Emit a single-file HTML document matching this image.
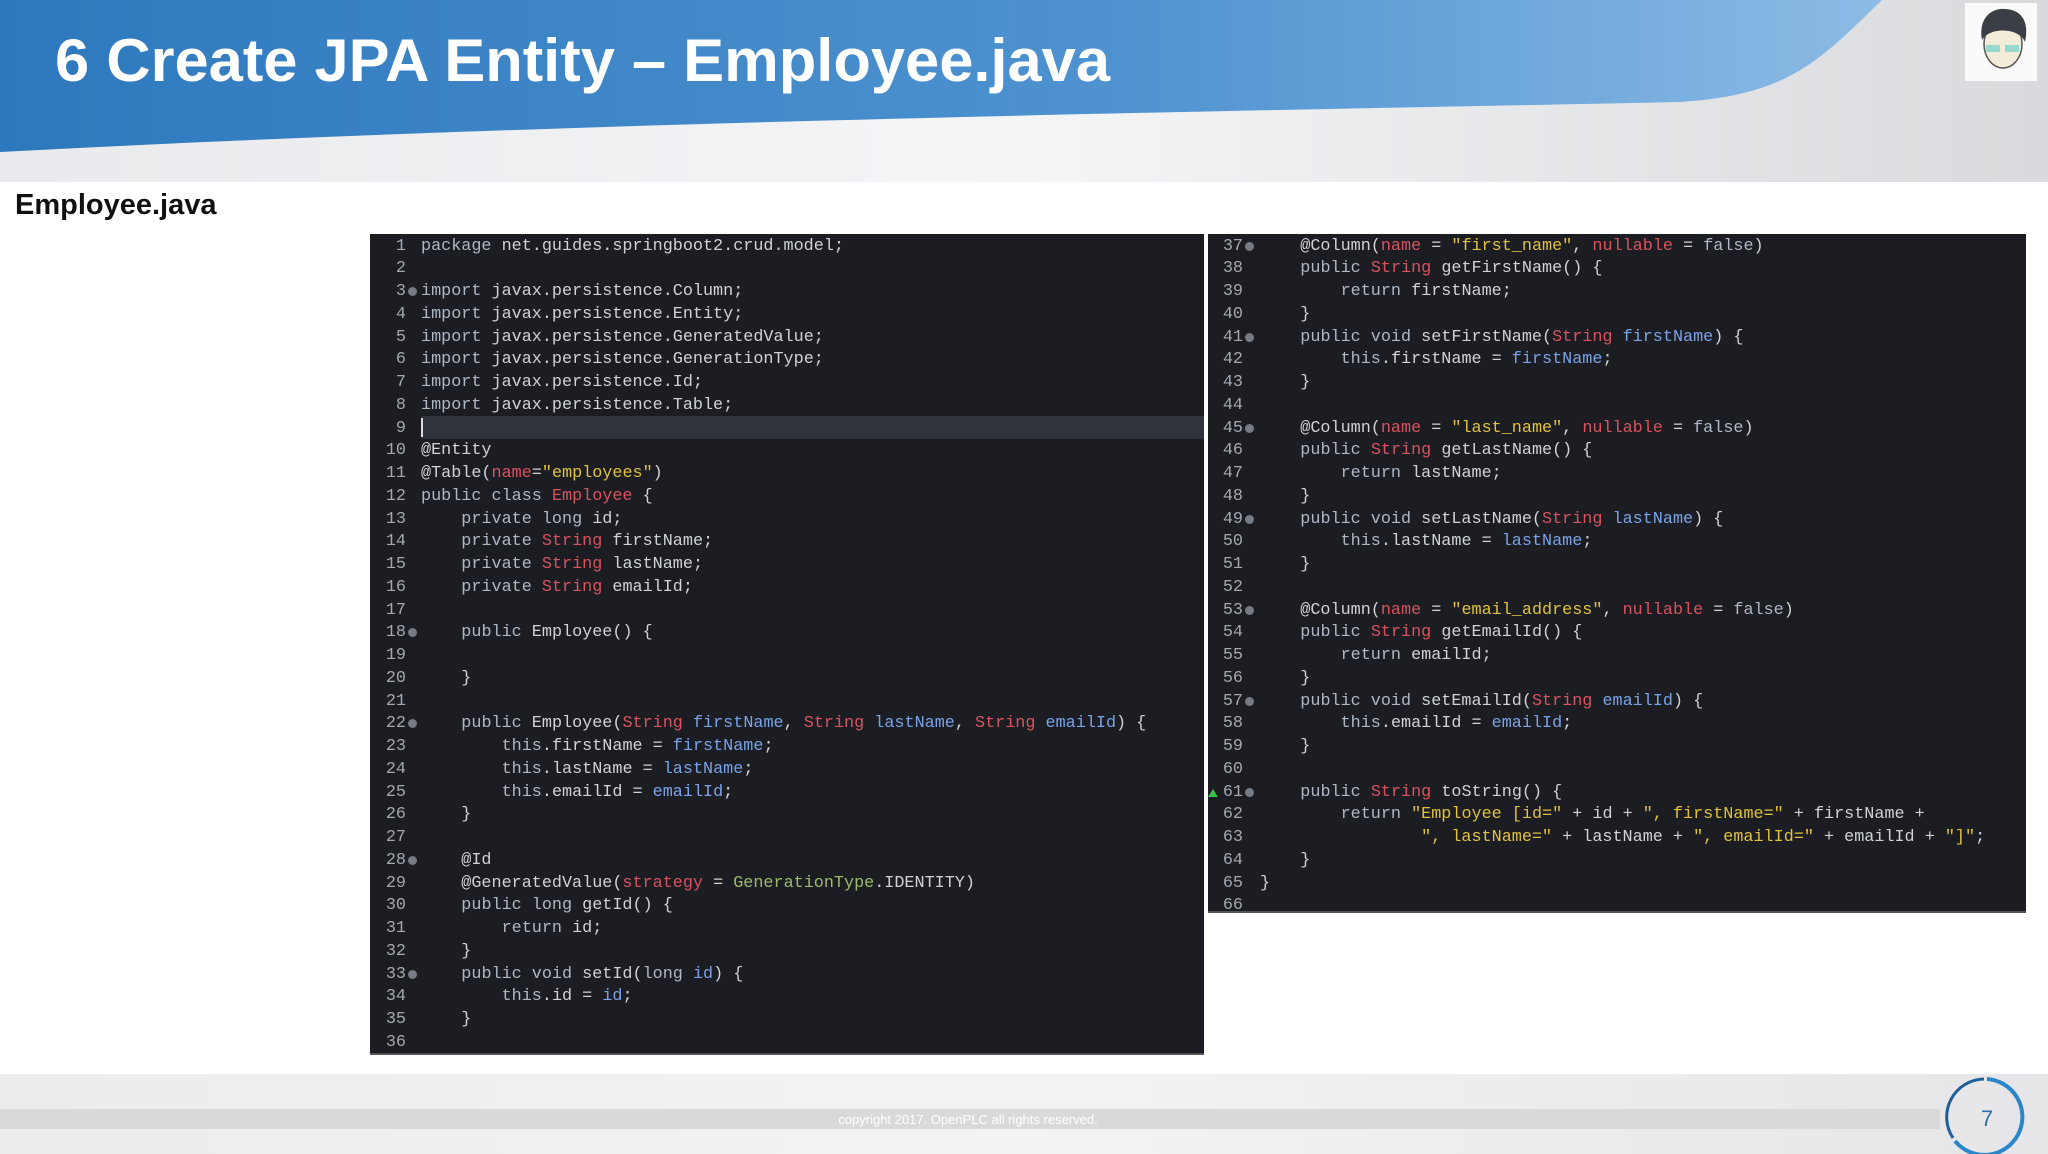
<!DOCTYPE html>
<html><head><meta charset="utf-8"><style>
*{margin:0;padding:0;box-sizing:border-box}
body{width:2048px;height:1152px;position:relative;overflow:hidden;background:#fff;font-family:"Liberation Sans",sans-serif}
.panel{position:absolute;background:#1b1d23;font-family:"Liberation Mono",monospace;font-size:16.8px;color:#cfd3d8}
.l{position:absolute;left:0;right:0;height:22.75px;line-height:22.75px;white-space:pre}
.n{position:absolute;text-align:right;color:#a4a9b0}
.m{position:absolute;width:9px;height:9px;border-radius:50%;background:#777c84;top:6px}
.c{position:absolute}
.k{color:#aeb7c3}.t{color:#d9535f}.s{color:#e0c23c}.p{color:#7aa3e6}.a{color:#d9535f}.g{color:#9dbb6a}
</style></head><body>
<svg width="2048" height="182" style="position:absolute;left:0;top:0">
<defs>
<linearGradient id="bl" x1="0" y1="0" x2="1" y2="0"><stop offset="0" stop-color="#2d78bd"/><stop offset="0.6" stop-color="#4f93d0"/><stop offset="1" stop-color="#8cbbe5"/></linearGradient>
<linearGradient id="gr" x1="0" y1="0" x2="1" y2="0"><stop offset="0" stop-color="#e9eaed"/><stop offset="0.5" stop-color="#f4f5f7"/><stop offset="1" stop-color="#d9dadd"/></linearGradient>
</defs>
<rect width="2048" height="182" fill="url(#gr)"/>
<path d="M0 0 H1882 C1820 60 1790 95 1680 102 C1300 110 600 120 0 152 Z" fill="url(#bl)"/>
<text x="55" y="81" font-family="Liberation Sans" font-weight="bold" font-size="60" fill="#fff" textLength="1055" lengthAdjust="spacingAndGlyphs">6 Create JPA Entity – Employee.java</text>
<rect x="1965" y="3" width="72" height="78" fill="#fafafa"/>
<ellipse cx="2003" cy="44" rx="19" ry="24" fill="#f2ecd8" stroke="#555" stroke-width="1.5"/>
<path d="M1982 40 C1978 18 1992 8 2004 9 C2020 9 2030 20 2025 42 C2020 28 1990 26 1982 40Z" fill="#3b3e44"/>
<rect x="1986" y="45" width="14" height="7" fill="#7fd3cc" opacity=".8"/><rect x="2005" y="45" width="14" height="7" fill="#7fd3cc" opacity=".8"/>
</svg>
<div style="position:absolute;left:15px;top:189px;font-size:29px;font-weight:bold;color:#111">Employee.java</div>

<div class="panel" style="left:370px;top:234px;width:834px;height:821px;border-bottom:2px solid #555">
<div style="position:absolute;left:51px;right:0;top:182px;height:23px;background:#30333a"></div>
<div style="position:absolute;left:51px;top:184px;width:2px;height:19px;background:#ddd"></div>
<div id="L"></div>
</div>
<div class="panel" style="left:1208px;top:234px;width:818px;height:679px;border-bottom:2px solid #555">
<div id="R"></div>
</div>

<svg width="2048" height="80" style="position:absolute;left:0;top:1074px">
<defs><linearGradient id="ft" x1="0" y1="0" x2="1" y2="0"><stop offset="0" stop-color="#ececee"/><stop offset=".5" stop-color="#f3f3f5"/><stop offset="1" stop-color="#e6e6e9"/></linearGradient></defs>
<rect width="2048" height="80" fill="url(#ft)"/>
<rect x="0" y="35" width="1940" height="20" fill="#d9d9db"/>
<text x="968" y="50" text-anchor="middle" font-family="Liberation Sans" font-size="13" fill="#fff">copyright 2017. OpenPLC all rights reserved.</text>
<path d="M1987 5 A38 38 0 1 1 1955 67" fill="none" stroke="#2a86c8" stroke-width="4"/>
<path d="M1953 64 A38 38 0 0 1 1984 5" fill="none" stroke="#1f5e98" stroke-width="3"/>
<text x="1987" y="52" text-anchor="middle" font-family="Liberation Sans" font-size="22" fill="#2a6fb0">7</text>
</svg>

<script>
var left=[
'<span class="k">package</span> net.guides.springboot2.crud.model;','',
'<span class="k">import</span> javax.persistence.Column;',
'<span class="k">import</span> javax.persistence.Entity;',
'<span class="k">import</span> javax.persistence.GeneratedValue;',
'<span class="k">import</span> javax.persistence.GenerationType;',
'<span class="k">import</span> javax.persistence.Id;',
'<span class="k">import</span> javax.persistence.Table;','',
'@Entity',
'@Table(<span class="a">name</span>=<span class="s">"employees"</span>)',
'<span class="k">public class</span> <span class="t">Employee</span> {',
'    <span class="k">private long</span> id;',
'    <span class="k">private</span> <span class="t">String</span> firstName;',
'    <span class="k">private</span> <span class="t">String</span> lastName;',
'    <span class="k">private</span> <span class="t">String</span> emailId;','',
'    <span class="k">public</span> Employee() {','','    }','',
'    <span class="k">public</span> Employee(<span class="t">String</span> <span class="p">firstName</span>, <span class="t">String</span> <span class="p">lastName</span>, <span class="t">String</span> <span class="p">emailId</span>) {',
'        <span class="k">this</span>.firstName = <span class="p">firstName</span>;',
'        <span class="k">this</span>.lastName = <span class="p">lastName</span>;',
'        <span class="k">this</span>.emailId = <span class="p">emailId</span>;',
'    }','',
'    @Id',
'    @GeneratedValue(<span class="a">strategy</span> = <span class="g">GenerationType</span>.IDENTITY)',
'    <span class="k">public long</span> getId() {',
'        <span class="k">return</span> id;','    }',
'    <span class="k">public void</span> setId(<span class="k">long</span> <span class="p">id</span>) {',
'        <span class="k">this</span>.id = <span class="p">id</span>;','    }',''];
function col(n){return '    @Column(<span class="a">name</span> = <span class="s">"'+n+'"</span>, <span class="a">nullable</span> = <span class="k">false</span>)'}
function gs(N,f){return ['    <span class="k">public</span> <span class="t">String</span> get'+N+'() {','        <span class="k">return</span> '+f+';','    }',
'    <span class="k">public void</span> set'+N+'(<span class="t">String</span> <span class="p">'+f+'</span>) {','        <span class="k">this</span>.'+f+' = <span class="p">'+f+'</span>;','    }']}
var right=[].concat([col('first_name')],gs('FirstName','firstName'),[''],[col('last_name')],gs('LastName','lastName'),[''],[col('email_address')],gs('EmailId','emailId'),[''],[
'    <span class="k">public</span> <span class="t">String</span> toString() {',
'        <span class="k">return</span> <span class="s">"Employee [id="</span> + id + <span class="s">", firstName="</span> + firstName +',
'                <span class="s">", lastName="</span> + lastName + <span class="s">", emailId="</span> + emailId + <span class="s">"]"</span>;',
'    }','}','']);
var marks={3:1,18:1,22:1,28:1,33:1,37:1,41:1,45:1,49:1,53:1,57:1,61:1};
function build(id,arr,start,nr,cx){var h='';for(var i=0;i<arr.length;i++){var n=start+i;var top=1.5+i*22.75;
h+='<div class="l" style="top:'+top+'px"><span class="n" style="left:0;width:'+nr+'px">'+n+'</span>'+(marks[n]?'<span class="m" style="left:'+(nr+2)+'px"></span>':'')+(n==61?'<span style="position:absolute;left:0;top:7px;width:0;height:0;border-left:5px solid transparent;border-right:5px solid transparent;border-bottom:8px solid #3bbf4a"></span>':'')+'<span class="c" style="left:'+cx+'px">'+arr[i]+'</span></div>';}
document.getElementById(id).innerHTML=h;}
build('L',left,1,36,51);build('R',right,37,35,52);
</script>
</body></html>
